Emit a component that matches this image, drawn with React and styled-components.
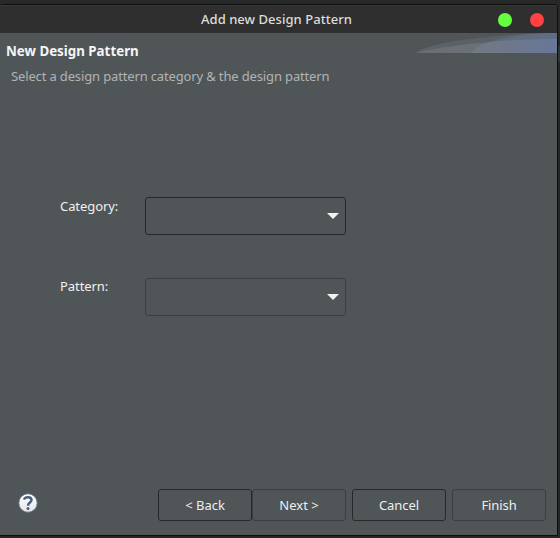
import React from 'react';
import styled, { createGlobalStyle } from 'styled-components';

const Global = createGlobalStyle`
  * { box-sizing: border-box; }
  body { margin: 0; background: #252626; font-family: "Noto Sans", "Open Sans", sans-serif; }
`;

const Desktop = styled.div`
  width: 560px;
  height: 538px;
  padding-top: 4px;
  overflow: hidden;
  background: linear-gradient(#272828 0 46px, #323637 46px 62px, #252626 62px);
`;

const Dialog = styled.main`
  display: flex;
  flex-direction: column;
  width: 558px;
  height: 532px;
  border: solid #0c0d0d;
  border-width: 1px 1px 1px 0;
  border-radius: 3px 4px 0 0;
  background: #505658;
  overflow: hidden;
`;

const TitleBar = styled.header`
  display: grid;
  grid-template-columns: 1fr auto;
  align-items: center;
  flex: 0 0 28px;
  padding: 0 13px 0 0;
  background: #2f2f2f;
  border-top: 1px solid #393939;
`;

const WindowTitle = styled.div`
  padding: 0 0 2px 201px;
  font-size: 13px;
  line-height: 18px;
  font-weight: 500;
  letter-spacing: 0.04px;
  color: #dcdcdc;
  white-space: nowrap;
`;

const WindowControls = styled.div`
  display: flex;
  gap: 18px;
`;

const Control = styled.span`
  width: 14px;
  height: 14px;
  border-radius: 50%;
  background: ${(p) => p.$color};
`;

const Banner = styled.section`
  display: flex;
  justify-content: space-between;
  flex: 0 0 61px;
`;

const Heading = styled.h1`
  margin: 9px 0 0 6px;
  font-size: 13.33px;
  line-height: 18px;
  font-weight: 700;
  letter-spacing: 0;
  color: #f5f5f5;
`;

const Description = styled.p`
  margin: 7px 0 0 11px;
  font-size: 13px;
  line-height: 18px;
  letter-spacing: -0.145px;
  color: #b0b3b4;
  white-space: nowrap;
`;

const Swoosh = styled.svg`
  display: block;
  width: 141px;
  height: 20px;
`;

const Form = styled.form`
  display: grid;
  grid-template-columns: 85px 201px;
  grid-auto-rows: 38px;
  row-gap: 43px;
  padding: 103px 0 0 60px;
  flex: 1;
`;

const Label = styled.label`
  margin-top: ${(p) => p.$offset || 0}px;
  font-size: 13px;
  line-height: 18px;
  letter-spacing: -0.07px;
  color: #f0f0f0;
`;

const Select = styled.button`
  display: flex;
  align-items: center;
  justify-content: flex-end;
  height: 38px;
  padding: 0 6px;
  border: 1px solid ${(p) => (p.$muted ? '#3b3f41' : '#26292a')};
  border-radius: 3px;
  background: #505658;
`;

const Footer = styled.footer`
  display: flex;
  align-items: flex-start;
  flex: 0 0 46px;
  padding: 0 11px 0 18px;
`;

const HelpIcon = styled.svg`
  width: 20px;
  height: 20px;
  margin: 4px 120px 0 0;
`;

const Actions = styled.div`
  display: flex;
  gap: 6px;
`;

const StepActions = styled.div`
  display: flex;
`;

const Button = styled.button`
  width: 94px;
  height: 32px;
  padding: 0;
  border: 1px solid ${(p) => (p.$muted ? '#3b3f41' : '#26292a')};
  border-radius: 3px;
  background: #505658;
  color: #ededed;
  font: 13px/18px "Noto Sans", "Open Sans", sans-serif;
  letter-spacing: ${(p) => p.$spacing || 0}px;
`;

function Dropdown({ muted, label }) {
  return (
    <Select type="button" $muted={muted} aria-label={label}>
      <svg width="12" height="6" viewBox="0 0 12 6">
        <path d="M0 0h12L6 6z" fill="#f2f2f2" />
      </svg>
    </Select>
  );
}

export default function App() {
  return (
    <>
      <Global />
      <Desktop>
        <Dialog>
          <TitleBar>
            <WindowTitle>Add new Design Pattern</WindowTitle>
            <WindowControls>
              <Control $color="#65ff3f" />
              <Control $color="#ff4242" />
            </WindowControls>
          </TitleBar>
          <Banner>
            <div>
              <Heading>New Design Pattern</Heading>
              <Description>Select a design pattern category &amp; the design pattern</Description>
            </div>
            <Swoosh viewBox="0 0 141 20">
              <defs>
                <linearGradient id="wing" gradientUnits="userSpaceOnUse" x1="0" x2="141">
                  <stop offset="0" stopColor="#686e70" />
                  <stop offset=".5" stopColor="#6b7179" />
                  <stop offset="1" stopColor="#69779a" />
                </linearGradient>
                <linearGradient id="back" gradientUnits="userSpaceOnUse" x1="0" x2="141">
                  <stop offset="0" stopColor="#5d6366" />
                  <stop offset=".5" stopColor="#596067" />
                  <stop offset="1" stopColor="#5b667d" />
                </linearGradient>
                <linearGradient id="front" gradientUnits="userSpaceOnUse" x1="57" x2="141">
                  <stop offset="0" stopColor="#737981" />
                  <stop offset="1" stopColor="#687799" />
                </linearGradient>
                <linearGradient id="tip" gradientUnits="userSpaceOnUse" x1="73" x2="141">
                  <stop offset="0" stopColor="#646b74" />
                  <stop offset="1" stopColor="#5f6c88" />
                </linearGradient>
              </defs>
              <path d="M0 20C12 9 72 3 123 0H141V20Z" fill="url(#back)" />
              <path d="M0 20C20 14 78 7 141 6V20Z" fill="url(#wing)" />
              <path d="M55 20C64 8 105 0 141 0V20Z" fill="url(#tip)" />
              <path d="M55 20C59 15 66 11 74 8.8C95 7 118 6 141 6V20Z" fill="url(#front)" />
            </Swoosh>
          </Banner>
          <Form>
            <Label>Category:</Label>
            <Dropdown label="Category" />
            <Label $offset={-1}>Pattern:</Label>
            <Dropdown label="Pattern" muted />
          </Form>
          <Footer>
            <HelpIcon viewBox="0 0 20 20">
              <defs>
                <linearGradient id="disc" x2="0" y2="1">
                  <stop offset="0" stopColor="#ffffff" />
                  <stop offset="1" stopColor="#e5e5e5" />
                </linearGradient>
              </defs>
              <circle cx="10" cy="10" r="9.2" fill="url(#disc)" stroke="#5a7392" strokeWidth=".8" />
              <path d="M6.2 6.7C6.6 3.4 13.5 3.1 13.5 7.1C13.5 9.7 10 9.5 10 12.8" fill="none" stroke="#4b607f" strokeWidth="2.5" />
              <circle cx="10" cy="15.6" r="1.5" fill="#4b607f" />
            </HelpIcon>
            <Actions>
              <StepActions>
                <Button>&lt; Back</Button>
                <Button $muted>Next &gt;</Button>
              </StepActions>
              <Button $spacing={-0.06}>Cancel</Button>
              <Button $muted $spacing={-0.1}>Finish</Button>
            </Actions>
          </Footer>
        </Dialog>
      </Desktop>
    </>
  );
}
